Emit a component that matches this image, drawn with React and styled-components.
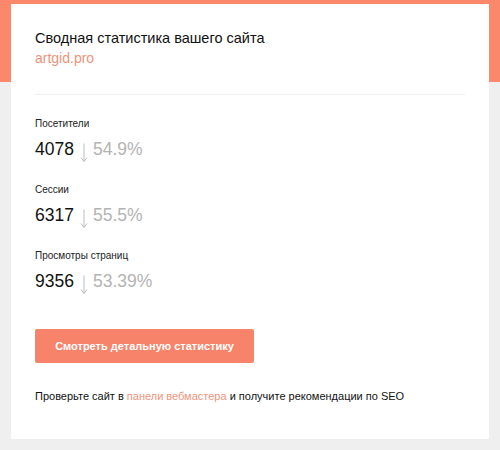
import React from 'react';
import styled, { createGlobalStyle } from 'styled-components';

const Global = createGlobalStyle`
  html, body {
    margin: 0;
    padding: 0;
  }
  body {
    background: linear-gradient(#fc886b 0, #fc886b 82px, #efefef 82px, #efefef 100%);
    min-height: 450px;
    font-family: "Liberation Sans", Arial, sans-serif;
    color: #111;
  }
`;

const Card = styled.div`
  margin: 4px 11px 0 11px;
  height: 435px;
  box-sizing: border-box;
  background: #fff;
  padding: 26px 24px 0 24px;
`;

const Title = styled.div`
  font-size: 14.5px;
  line-height: 17px;
  color: #111;
`;

const Site = styled.a`
  display: block;
  margin-top: 3px;
  font-size: 14px;
  line-height: 17px;
  color: #f0937a;
  text-decoration: none;
`;

const Divider = styled.hr`
  border: 0;
  border-top: 1px solid #f0f0f0;
  margin: 27px 0 0 0;
`;

const Stats = styled.div`
  display: flex;
  flex-direction: column;
  gap: 25px;
  padding-top: 23px;
`;

const Stat = styled.div`
  display: flex;
  flex-direction: column;
  gap: 9px;
`;

const Label = styled.div`
  font-size: 10px;
  line-height: 12px;
  color: #222;
`;

const ValueRow = styled.div`
  display: flex;
  align-items: baseline;
  height: 20px;
  font-size: 17.5px;
  line-height: 20px;
`;

const Value = styled.span`
  color: #111;
`;

const Change = styled.span`
  color: #b3b3b3;
`;

const Arrow = styled.svg`
  align-self: flex-start;
  flex: none;
  width: 8px;
  height: 20px;
  margin: 4px 5px 0 6px;
`;

const Button = styled.button`
  margin-top: 38px;
  width: 219px;
  height: 34px;
  border: 0;
  border-radius: 2px;
  background: #f7846a;
  color: #fff;
  font-family: "Liberation Sans", Arial, sans-serif;
  font-weight: bold;
  font-size: 11px;
  cursor: pointer;
`;

const Note = styled.p`
  margin: 27px 0 0 0;
  font-size: 11px;
  line-height: 13px;
  color: #111;
`;

const Link = styled.a`
  color: #f0937a;
  text-decoration: none;
`;

const DownArrow = () => (
  <Arrow viewBox="0 0 8 20">
    <path d="M4 0.5 V18.5 M1 14.5 L4 18.5 L7 14.5" fill="none" stroke="#bdbdbd" strokeWidth="1" />
  </Arrow>
);

const stats = [
  { label: 'Посетители', value: 4078, change: '54.9%' },
  { label: 'Сессии', value: 6317, change: '55.5%' },
  { label: 'Просмотры страниц', value: 9356, change: '53.39%' },
];

export default function App() {
  return (
    <>
      <Global />
      <Card>
        <Title>Сводная статистика вашего сайта</Title>
        <Site href="#">artgid.pro</Site>
        <Divider />
        <Stats>
          {stats.map((s) => (
            <Stat key={s.label}>
              <Label>{s.label}</Label>
              <ValueRow>
                <Value>{s.value}</Value>
                <DownArrow />
                <Change>{s.change}</Change>
              </ValueRow>
            </Stat>
          ))}
        </Stats>
        <Button>Смотреть детальную статистику</Button>
        <Note>
          Проверьте сайт в <Link href="#">панели вебмастера</Link> и получите рекомендации по SEO
        </Note>
      </Card>
    </>
  );
}
